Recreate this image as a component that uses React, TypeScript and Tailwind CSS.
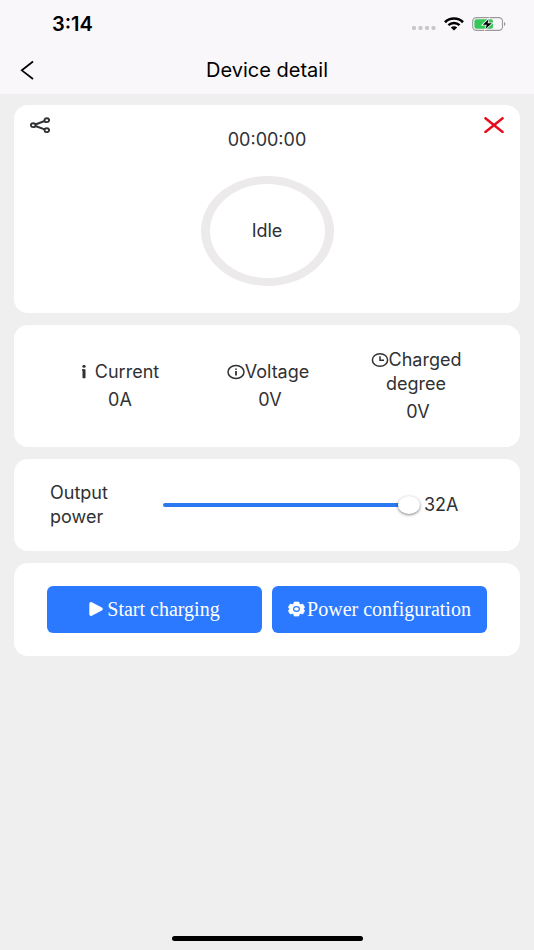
import React, { useState } from 'react';

const StatusBar = () => (
  <div className="h-12 flex items-center justify-between pl-[52px] pr-7 text-black">
    <span className="text-[20px] leading-6 font-semibold">3:14</span>
    <div className="flex items-center gap-2">
      <svg className="w-[25px] h-4" viewBox="0 0 25 16" fill="#c9c7c9">
        <rect x="1" y="10" width="4" height="4" rx="1.4" />
        <rect x="7.5" y="10" width="4" height="4" rx="1.4" />
        <rect x="14" y="10" width="4" height="4" rx="1.4" />
        <rect x="20.5" y="10" width="4" height="4" rx="1.4" />
      </svg>
      <svg className="w-5 h-4" viewBox="0 0 20 16" fill="none" stroke="currentColor">
        <path d="M1 6.2C6 1.3 14 1.3 19 6.2" strokeWidth="2.6" />
        <path d="M4.4 9.2C7.6 6.2 12.4 6.2 15.6 9.2" strokeWidth="2.4" />
        <path d="M6.8 11.6C8.6 9.8 11.4 9.8 13.2 11.6L10 14.4Z" fill="currentColor" stroke="none" />
      </svg>
      <svg className="w-[34px] h-4" viewBox="0 0 34 16">
        <rect x="0.7" y="1.6" width="29.8" height="12.8" rx="3.6" fill="none" stroke="#9b999b" strokeWidth="1.1" />
        <rect x="2.4" y="3.2" width="18.6" height="9.6" rx="2" fill="#35c759" />
        <path d="M32 6v4c1.9-.6 1.9-3.4 0-4z" fill="#9b999b" />
        <path d="M16.6 3.2L10.8 8.7h4l-1.4 4.3 6.4-5.8h-4.2z" fill="#000" stroke="#f9f7f9" strokeWidth="1.6" paintOrder="stroke" />
      </svg>
    </div>
  </div>
);

const InfoIcon = () => (
  <svg className="w-[18px] h-4 shrink-0" viewBox="0 0 18 16" fill="none" stroke="currentColor" strokeWidth="1.5">
    <ellipse cx="9" cy="8" rx="8" ry="6.6" />
    <path d="M9 7v4.4M9 4.4v1.4" strokeWidth="1.8" />
  </svg>
);

const ClockIcon = () => (
  <svg className="w-[18px] h-4 shrink-0" viewBox="0 0 18 16" fill="none" stroke="currentColor" strokeWidth="1.5">
    <ellipse cx="9" cy="8" rx="7.6" ry="6.3" />
    <path d="M9 4.2V8.2h4" />
  </svg>
);

const CurrentIcon = () => (
  <svg className="w-[6px] h-4 shrink-0" viewBox="0 0 6 16" fill="currentColor">
    <ellipse cx="3" cy="2.4" rx="1.7" ry="1.4" />
    <rect x="1.5" y="5.2" width="3" height="9" rx="0.6" />
    <path d="M1 5.2h2v1.2H1z" />
  </svg>
);

const GearIcon = () => (
  <svg className="w-[17px] h-4 shrink-0" viewBox="0 0 17 16">
    <path
      d="M6.2 1h4.6l.6 2 1.2.6 2.2-.5 1.9 3.2-1.1 1.4v.6l1.1 1.5-1.9 3.2-2.2-.5-1.2.6-.6 2H6.2l-.6-2-1.2-.6-2.2.5L.3 9.8l1.1-1.5v-.6L.3 6.3l1.9-3.2 2.2.5 1.2-.6z"
      fill="#fff"
      stroke="#fff"
      strokeWidth="0.6"
      strokeLinejoin="round"
    />
    <ellipse cx="8.5" cy="8" rx="2.9" ry="2.4" fill="none" stroke="#2b79ff" strokeWidth="1.2" />
  </svg>
);

const PlayIcon = () => (
  <svg className="w-[14px] h-4 shrink-0" viewBox="0 0 14 16" fill="#fff" stroke="#fff" strokeWidth="3.4" strokeLinejoin="round">
    <path d="M2 2.7L12 8L2 13.3z" />
  </svg>
);

const stats = [
  { name: 'Current', value: '0A', icon: CurrentIcon, label: 'gap-2', offset: '' },
  { name: 'Voltage', value: '0V', icon: InfoIcon, label: '', offset: 'pl-1' },
  { name: 'Charged degree', value: '0V', icon: ClockIcon, label: '', offset: 'pl-1' },
];

const App = () => {
  const [power, setPower] = useState(32);

  return (
    <div className="min-h-screen flex flex-col bg-[#efefef] text-[#303133] text-[18px] leading-6 font-['Inter','Liberation_Sans',sans-serif]">
      <header className="bg-[#f9f7f9]">
        <StatusBar />
        <div className="h-[46px] pb-[2px] px-4 grid grid-cols-[32px_1fr_32px] items-center">
          <button type="button" aria-label="Back" className="text-black p-1">
            <svg className="w-4 h-5" viewBox="0 0 16 20" fill="none" stroke="currentColor" strokeWidth="1.7">
              <path d="M13 1.5L1.8 10.3L13 19" />
            </svg>
          </button>
          <h1 className="text-center text-[20px] text-black">Device detail</h1>
        </div>
      </header>

      <main className="flex-1 flex flex-col gap-3 px-[14px] pt-[11px]">
        <section className="bg-white rounded-[14px] px-4 pt-3 pb-[27px]">
          <div className="flex justify-between items-start">
            <button type="button" aria-label="Share">
              <svg className="w-5 h-4" viewBox="0 0 20 16" fill="none" stroke="currentColor" strokeWidth="1.9">
                <ellipse cx="3.2" cy="8.2" rx="2.3" ry="1.9" />
                <ellipse cx="16.8" cy="3.2" rx="2.3" ry="1.9" />
                <ellipse cx="16.8" cy="13.2" rx="2.3" ry="1.9" />
                <path d="M5.4 7.5L14.6 4M5.4 9L14.6 12.4" />
              </svg>
            </button>
            <p className="pt-[11px]">00:00:00</p>
            <button type="button" aria-label="Remove device">
              <svg className="w-5 h-4" viewBox="0 0 20 16" fill="none" stroke="#e60c1c" strokeWidth="2.4" strokeLinecap="round">
                <path d="M1.4 1.2L18.6 15M18.6 1.2L1.4 15" />
              </svg>
            </button>
          </div>
          <div className="mt-6 mx-auto w-[133px] h-[110px] rounded-[50%] border-x-[9px] border-y-8 border-[#edeaec] flex items-center justify-center">
            Idle
          </div>
        </section>

        <section className="bg-white rounded-[14px] pl-8 pr-[30px] py-[23px] grid grid-cols-3 items-center text-center">
          {stats.map((item) => {
            const Icon = item.icon;
            const [first, ...rest] = item.name.split(' ');

            return (
              <div key={item.name} className="flex flex-col gap-1">
                <p>
                  <span className={`flex items-center justify-center ${item.label}`}>
                    <Icon />
                    {first}
                  </span>
                  {rest.join(' ')}
                </p>
                <p className={item.offset}>{item.value}</p>
              </div>
            );
          })}
        </section>

        <section className="bg-white rounded-[14px] pl-9 pr-[58px] py-[22px] flex items-center">
          <label htmlFor="power" className="w-[113px] pr-8">
            Output power
          </label>
          <input
            id="power"
            type="range"
            min={0}
            max={32}
            value={power}
            onChange={(e) => setPower(Number(e.target.value))}
            className="flex-1 min-w-0 h-5 appearance-none bg-transparent [&::-webkit-slider-runnable-track]:h-[4px] [&::-webkit-slider-runnable-track]:rounded-full [&::-webkit-slider-runnable-track]:bg-[#2b79f0] [&::-webkit-slider-thumb]:appearance-none [&::-webkit-slider-thumb]:w-[22px] [&::-webkit-slider-thumb]:h-[18px] [&::-webkit-slider-thumb]:-mt-[7px] [&::-webkit-slider-thumb]:rounded-[50%] [&::-webkit-slider-thumb]:bg-white [&::-webkit-slider-thumb]:shadow-[0_1px_3px_rgba(0,0,0,0.5)]"
          />
          <output htmlFor="power" className="w-[38px] ml-1">
            {power}A
          </output>
        </section>

        <section className="bg-white rounded-[14px] px-[33px] py-[23px] grid grid-cols-2 gap-[10px] text-white text-[20px] font-['Liberation_Serif',serif]">
          <button type="button" className="h-[47px] pb-[2px] rounded-[6px] bg-[#2b79ff] flex items-center justify-center gap-1">
            <PlayIcon />
            Start charging
          </button>
          <button type="button" className="h-[47px] pb-[2px] rounded-[6px] bg-[#2b79ff] flex items-center justify-center gap-[2px] whitespace-nowrap">
            <GearIcon />
            Power configuration
          </button>
        </section>
      </main>

      <div className="w-[191px] h-[5px] mx-auto mb-[9px] rounded-full bg-black" />
    </div>
  );
};

export default App;
